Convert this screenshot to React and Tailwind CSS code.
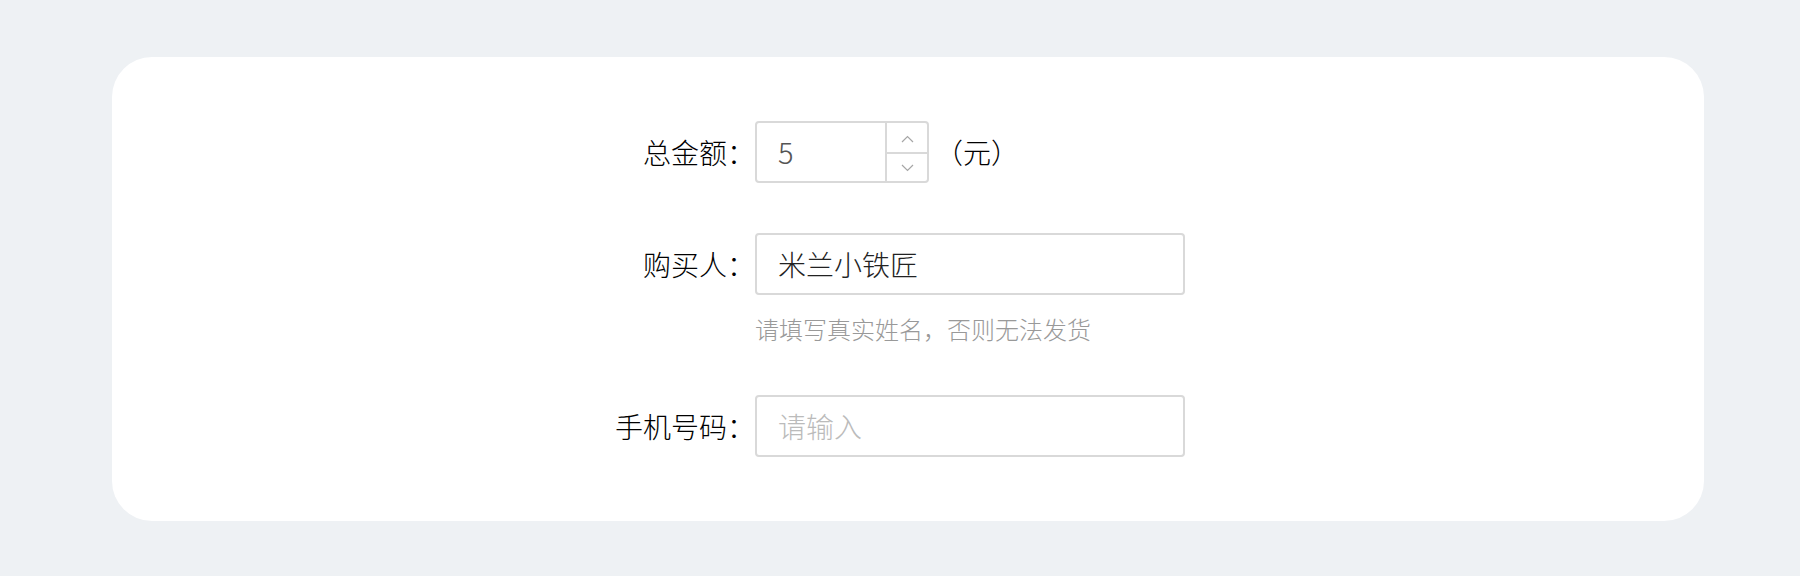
import React from 'react';

const font = { fontFamily: '"Noto Sans CJK SC", "Noto Sans", sans-serif' };

const Chevron = ({ up }) => (
  <svg width="13" height="8" viewBox="0 0 13 8" fill="none">
    <polyline
      points={up ? '1,7 6.5,1.5 12,7' : '1,1 6.5,6.5 12,1'}
      stroke="#a6a6a6"
      strokeWidth="1.2"
    />
  </svg>
);

const Label = ({ children }) => (
  <div className="w-[200px] shrink-0 text-right text-[28px] leading-[40px] text-black">{children}</div>
);

const App = () => {
  return (
    <div className="min-h-[576px] w-full bg-[#eef1f4] pt-[57px] pb-[55px] font-light" style={font}>
      <div className="ml-[112px] w-[1592px] rounded-[40px] bg-white pl-[443px] py-[64px]">
        {/* 总金额 */}
        <div className="flex items-center">
          <Label>总金额：</Label>
          <div className="flex h-[62px] w-[174px] rounded-[4px] border-2 border-[#d9d9d9]">
            <div className="flex flex-1 items-center pl-[21px] text-[29px] text-[#555]">5</div>
            <div className="flex w-[42px] flex-col border-l-2 border-[#d9d9d9]">
              <div className="flex flex-1 items-center justify-center pt-[2px]">
                <Chevron up />
              </div>
              <div className="flex flex-1 items-center justify-center border-t-2 border-[#d9d9d9]">
                <Chevron />
              </div>
            </div>
          </div>
          <span className="ml-[6px] text-[28px] text-black">（元）</span>
        </div>

        {/* 购买人 */}
        <div className="mt-[50px] flex items-center">
          <Label>购买人：</Label>
          <div className="flex h-[62px] w-[430px] items-center rounded-[4px] border-2 border-[#d9d9d9] pl-[21px] text-[28px] text-[#222]">
            米兰小铁匠
          </div>
        </div>
        <div className="mt-[16px] pl-[200px] text-[24px] leading-[36px] text-[#999]">
          请填写真实姓名，否则无法发货
        </div>

        {/* 手机号码 */}
        <div className="mt-[48px] flex items-center">
          <Label>手机号码：</Label>
          <div className="flex h-[62px] w-[430px] items-center rounded-[4px] border-2 border-[#d9d9d9] pl-[21px] text-[28px] text-[#bbb]">
            请输入
          </div>
        </div>
      </div>
    </div>
  );
};

export default App;
